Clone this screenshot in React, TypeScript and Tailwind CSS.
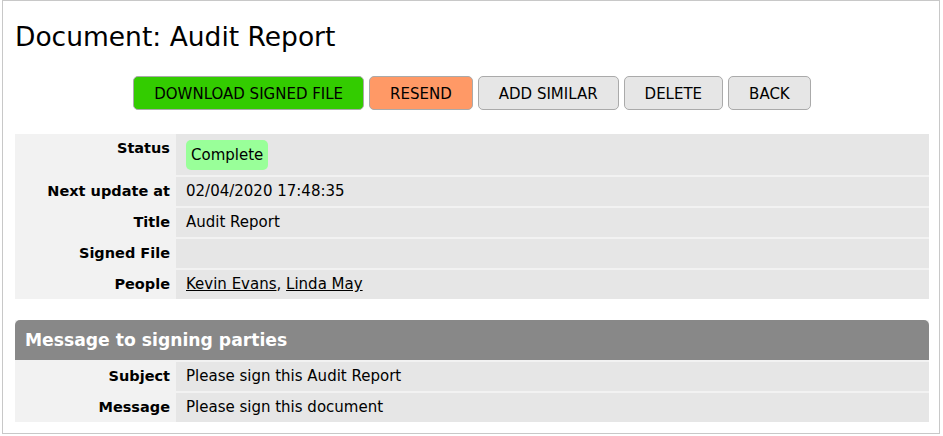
import React from "react";

type Row = { label: string; value: React.ReactNode; tall?: boolean };

const detailRows: Row[] = [
  {
    label: "Status",
    tall: true,
    value: (
      <span className="inline-block rounded-[5px] bg-[#99ff99] px-[5px] py-[6px] leading-[18px]">
        Complete
      </span>
    ),
  },
  { label: "Next update at", value: "02/04/2020 17:48:35" },
  { label: "Title", value: "Audit Report" },
  { label: "Signed File", value: "" },
  {
    label: "People",
    value: (
      <>
        <a href="#" className="text-black underline">
          Kevin Evans
        </a>
        ,{" "}
        <a href="#" className="text-black underline">
          Linda May
        </a>
      </>
    ),
  },
];

const messageRows: Row[] = [
  { label: "Subject", value: "Please sign this Audit Report" },
  { label: "Message", value: "Please sign this document" },
];

const DetailTable: React.FC<{ rows: Row[] }> = ({ rows }) => (
  <div className="flex flex-col gap-[2px] bg-[#f2f2f2]">
    {rows.map((row) => (
      <div key={row.label} className="flex">
        <div className="w-[161px] shrink-0 py-[6px] pr-[6px] text-right text-[14.5px] font-bold leading-[17px]">
          {row.label}
        </div>
        <div
          className={
            row.tall
              ? "flex-1 bg-[#e6e6e6] pl-[10px] pt-[6px] pb-[5px] text-[15px] leading-[17px]"
              : "flex-1 bg-[#e6e6e6] pl-[10px] py-[6px] text-[15px] leading-[17px] min-h-[29px]"
          }
        >
          {row.value}
        </div>
      </div>
    ))}
  </div>
);

const btn =
  "rounded-[5px] border border-[#aaaaaa] px-[20px] pt-[8px] pb-[6px] text-[15px] leading-[18px] text-black uppercase";

export default function App() {
  return (
    <div
      className="ml-[2px] w-[938px] border border-[#c8c8c8] bg-white pt-[21px] pb-[11px] pl-[12px] pr-[10px] text-black"
      style={{ fontFamily: '"DejaVu Sans", Verdana, sans-serif' }}
    >
      <h1 className="text-[26.5px] font-normal leading-[30px]">Document: Audit Report</h1>

      <div className="mt-[24px] flex justify-center gap-[5px]">
        <button className={`${btn} bg-[#33cc00]`}>Download Signed File</button>
        <button className={`${btn} bg-[#ff9966]`}>Resend</button>
        <button className={`${btn} bg-[#e6e6e6]`}>Add Similar</button>
        <button className={`${btn} bg-[#e6e6e6]`}>Delete</button>
        <button className={`${btn} bg-[#e6e6e6]`}>Back</button>
      </div>

      <div className="mt-[24px]">
        <DetailTable rows={detailRows} />
      </div>

      <div className="mt-[21px] flex flex-col gap-[2px] bg-[#f2f2f2]">
        <div className="h-[40px] rounded-t-[5px] bg-[#888888] pl-[10px] text-[17.2px] font-bold leading-[40px] text-white">
          Message to signing parties
        </div>
        <DetailTable rows={messageRows} />
      </div>
    </div>
  );
}
